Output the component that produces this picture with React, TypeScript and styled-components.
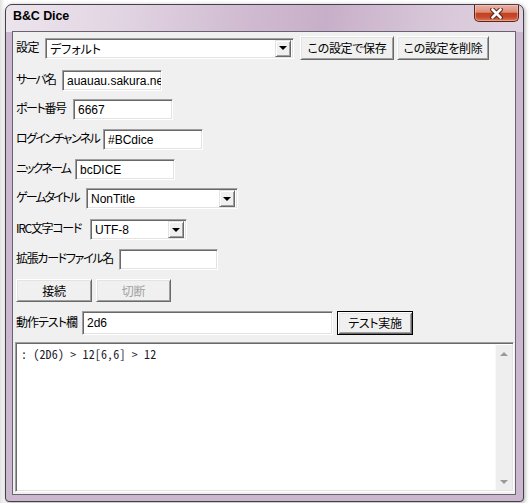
import React from "react";
import styled, { createGlobalStyle } from "styled-components";

const Global = createGlobalStyle`
  html, body { margin: 0; padding: 0; background: #ffffff; }
  body { width: 530px; height: 503px; overflow: hidden; font-family: "Noto Sans CJK JP", sans-serif; }
  * { box-sizing: border-box; }
`;

const JP = `"Noto Sans CJK JP", "Liberation Sans", sans-serif`;
const LAT = `"Liberation Sans", "Noto Sans CJK JP", sans-serif`;

const Stage = styled.div`
  width: 530px;
  height: 503px;
  padding: 4px 0 0 5px;
  background: linear-gradient(90deg, #e2e2e2 0px, #ffffff 5px);
`;

const Window = styled.div`
  width: 519px;
  height: 498px;
  border: 1px solid #46404a;
  border-radius: 7px 7px 4px 4px;
  background:
    linear-gradient(100deg, #ece5ed 0%, #e2d5e3 22%, #cfb9d0 48%, #c8afc9 62%, #d7c6d8 82%, #e0d3e1 100%) top left / 100% 27px no-repeat,
    #cbb7ce;
  box-shadow: 1px 1px 4px rgba(0, 0, 0, 0.35);
  display: flex;
  flex-direction: column;
  padding: 0 7px 6px 6px;
`;

const TitleBar = styled.div`
  height: 26px;
  display: flex;
  align-items: flex-start;
  justify-content: space-between;
`;

const Title = styled.div`
  font-family: "Liberation Sans", sans-serif;
  font-weight: bold;
  font-size: 12.5px;
  line-height: 15px;
  padding: 4px 0 0 1px;
  color: #000;
  letter-spacing: -0.1px;
`;

const CloseButton = styled.div`
  width: 45px;
  height: 17px;
  margin-right: -3px;
  border: 1px solid #5e2418;
  border-top: none;
  border-radius: 0 0 5px 5px;
  background: linear-gradient(180deg, #eab2a4 0%, #dc8c79 45%, #c4401f 52%, #c64a2c 75%, #d9785b 100%);
  box-shadow: inset 0 0 0 1px rgba(255, 210, 200, 0.45);
  display: flex;
  align-items: center;
  justify-content: center;
`;

const Client = styled.div`
  flex: 1;
  border: 1px solid #6a6270;
  background: #f0f0f0;
  display: flex;
  flex-direction: column;
  padding: 0 0 0 2px;
`;

const Row = styled.div<{ $mt: number; $h: number }>`
  display: flex;
  align-items: center;
  margin-top: ${(p) => p.$mt}px;
  height: ${(p) => p.$h}px;
  padding-left: 1px;
`;

const Label = styled.div<{ $w: number; $ls?: number }>`
  width: ${(p) => p.$w}px;
  flex: none;
  font-family: ${JP};
  font-feature-settings: "palt";
  font-size: 12px;
  line-height: 14px;
  margin-bottom: 3px;
  color: #000;
  white-space: nowrap;
  letter-spacing: ${(p) => p.$ls ?? -1}px;
`;

const sunken = `
  border-style: solid;
  border-width: 1px;
  border-color: #a0a0a0 #ffffff #ffffff #a0a0a0;
  box-shadow: inset 1px 1px 0 #696969, inset -1px -1px 0 #e3e3e3;
  background: #ffffff;
`;

const Field = styled.div<{ $w: number; $jp?: boolean }>`
  ${sunken}
  width: ${(p) => p.$w}px;
  height: 21px;
  flex: none;
  padding: 0 0 0 4px;
  display: flex;
  align-items: center;
  overflow: hidden;
  white-space: nowrap;
  font-family: ${(p) => (p.$jp ? JP : LAT)};
  font-size: 12px;
  color: #000;
`;

const TallField = styled(Field)`
  height: 24px;
`;

const Combo = styled.div<{ $w: number; $jp?: boolean }>`
  ${sunken}
  width: ${(p) => p.$w}px;
  height: 21px;
  flex: none;
  padding: 2px 2px 2px 4px;
  display: flex;
  align-items: center;
  font-family: ${(p) => (p.$jp ? JP : LAT)};
  font-feature-settings: "palt";
  font-size: 12px;
  color: #000;
`;

const ComboText = styled.div`
  flex: 1;
  overflow: hidden;
  white-space: nowrap;
`;

const ArrowBtn = styled.div`
  width: 16px;
  height: 17px;
  flex: none;
  background: #f0f0f0;
  border-style: solid;
  border-width: 1px;
  border-color: #e3e3e3 #696969 #696969 #e3e3e3;
  box-shadow: inset 1px 1px 0 #ffffff, inset -1px -1px 0 #a0a0a0;
  display: flex;
  align-items: center;
  justify-content: center;
`;

const Tri = styled.div<{ $down?: boolean; $color: string }>`
  width: 0;
  height: 0;
  border-left: 4px solid transparent;
  border-right: 4px solid transparent;
  ${(p) =>
    p.$down
      ? `border-top: 4px solid ${p.$color};`
      : `border-bottom: 4px solid ${p.$color};`}
`;

const Button = styled.div<{ $w: number; $h: number; $ml?: number; $disabled?: boolean; $default?: boolean }>`
  width: ${(p) => p.$w}px;
  height: ${(p) => p.$h}px;
  margin-left: ${(p) => p.$ml ?? 0}px;
  flex: none;
  background: #f0f0f0;
  border-style: solid;
  border-width: 1px;
  ${(p) =>
    p.$default
      ? `border-color: #000000;
         box-shadow: inset 1px 1px 0 #ffffff, inset -1px -1px 0 #696969, inset 2px 2px 0 #e3e3e3, inset -2px -2px 0 #a0a0a0;`
      : `border-color: #ffffff #696969 #696969 #ffffff;
         box-shadow: inset 1px 1px 0 #e3e3e3, inset -1px -1px 0 #a0a0a0;`}
  display: flex;
  align-items: center;
  justify-content: center;
  padding-bottom: 1px;
  font-family: ${JP};
  font-feature-settings: "palt";
  font-size: 12px;
  letter-spacing: -0.3px;
  color: ${(p) => (p.$disabled ? "#a0a0a0" : "#000000")};
  white-space: nowrap;
`;

const Gap = styled.div<{ $w: number }>`
  width: ${(p) => p.$w}px;
  flex: none;
`;

const Output = styled.div`
  ${sunken}
  margin-top: 7px;
  width: 499px;
  height: 150px;
  display: flex;
  padding: 2px 1px 1px 2px;
`;

const OutText = styled.div`
  flex: 1;
  padding: 2px 0 0 3px;
  font-family: "Noto Sans Mono CJK JP", "Liberation Mono", monospace;
  font-size: 12px;
  line-height: 14px;
  letter-spacing: 0.15px;
  color: #1a1a2a;
  white-space: pre;
`;

const ScrollBar = styled.div`
  width: 17px;
  flex: none;
  background: #eeeeee;
  border-left: 1px solid #f8f8f8;
  display: flex;
  flex-direction: column;
  justify-content: space-between;
`;

const ScrollArrow = styled.div`
  height: 17px;
  display: flex;
  align-items: center;
  justify-content: center;
`;

export default function App() {
  return (
    <>
      <Global />
      <Stage>
        <Window>
          <TitleBar>
            <Title>B&amp;C Dice</Title>
            <CloseButton>
              <svg width="13" height="11" viewBox="0 0 13 11">
                <path d="M2.5 1.5 L10.5 9.5 M10.5 1.5 L2.5 9.5" stroke="#5a1e12" strokeWidth="4.6" strokeLinecap="round" fill="none" />
                <path d="M2.5 1.5 L10.5 9.5 M10.5 1.5 L2.5 9.5" stroke="#ffffff" strokeWidth="2.6" strokeLinecap="round" fill="none" />
              </svg>
            </CloseButton>
          </TitleBar>
          <Client>
            <Row $mt={4} $h={24}>
              <Label $w={29} $ls={-0.5}>設定</Label>
              <Combo $w={249} $jp>
                <ComboText>デフォルト</ComboText>
                <ArrowBtn>
                  <Tri $down $color="#000" />
                </ArrowBtn>
              </Combo>
              <Button $w={94} $h={24} $ml={6}>この設定で保存</Button>
              <Button $w={92} $h={24} $ml={3}>この設定を削除</Button>
            </Row>
            <Row $mt={10} $h={21}>
              <Label $w={46} $ls={-1.8}>サーバ名</Label>
              <Field $w={100}>auauau.sakura.ne</Field>
            </Row>
            <Row $mt={8} $h={21}>
              <Label $w={57} $ls={-1.4}>ポート番号</Label>
              <Field $w={100}>6667</Field>
            </Row>
            <Row $mt={9} $h={21}>
              <Label $w={87} $ls={-1.6}>ログインチャンネル</Label>
              <Field $w={100}>#BCdice</Field>
            </Row>
            <Row $mt={9} $h={21}>
              <Label $w={59} $ls={-1.9}>ニックネーム</Label>
              <Field $w={100}>bcDICE</Field>
            </Row>
            <Row $mt={8} $h={21}>
              <Label $w={70} $ls={-1.9}>ゲームタイトル</Label>
              <Combo $w={152}>
                <ComboText>NonTitle</ComboText>
                <ArrowBtn>
                  <Tri $down $color="#000" />
                </ArrowBtn>
              </Combo>
            </Row>
            <Row $mt={10} $h={21}>
              <Label $w={74} $ls={-1.3}>IRC文字コード</Label>
              <Combo $w={97}>
                <ComboText>UTF-8</ComboText>
                <ArrowBtn>
                  <Tri $down $color="#000" />
                </ArrowBtn>
              </Combo>
            </Row>
            <Row $mt={9} $h={21}>
              <Label $w={103} $ls={-1.3}>拡張カードファイル名</Label>
              <Field $w={99}></Field>
            </Row>
            <Row $mt={9} $h={23}>
              <Button $w={76} $h={23}>接続</Button>
              <Gap $w={4} />
              <Button $w={75} $h={23} $disabled>切断</Button>
            </Row>
            <Row $mt={9} $h={24}>
              <Label $w={66}>動作テスト欄</Label>
              <TallField $w={251}>2d6</TallField>
              <Button $w={76} $h={24} $ml={4} $default>テスト実施</Button>
            </Row>
            <Output>
              <OutText>{": (2D6) > 12[6,6] > 12"}</OutText>
              <ScrollBar>
                <ScrollArrow>
                  <Tri $color="#9a9a9a" />
                </ScrollArrow>
                <ScrollArrow>
                  <Tri $down $color="#9a9a9a" />
                </ScrollArrow>
              </ScrollBar>
            </Output>
          </Client>
        </Window>
      </Stage>
    </>
  );
}
